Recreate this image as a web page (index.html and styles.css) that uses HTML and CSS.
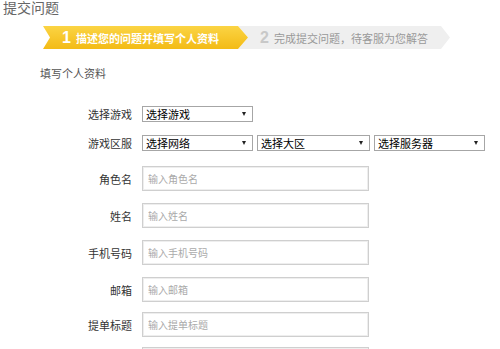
FILE: index.html
```html
<!DOCTYPE html>
<html lang="zh-CN">
<head>
    <meta charset="UTF-8">
    <title>提交问题</title>
    <link rel="stylesheet" href="styles.css">
</head>
<body>
    <div class="page">
        <h1 class="page-title">提交问题</h1>
        <div class="steps">
            <div class="step step-active"><span class="step-num">1</span>描述您的问题并填写个人资料</div>
            <div class="step step-next"><span class="step-num">2</span>完成提交问题，待客服为您解答</div>
        </div>
        <div class="section-title">填写个人资料</div>
        <form class="form">
            <div class="row row-select">
                <label>选择游戏</label>
                <div class="selects">
                    <div class="select w1">选择游戏</div>
                </div>
            </div>
            <div class="row row-select">
                <label>游戏区服</label>
                <div class="selects">
                    <div class="select w1">选择网络</div>
                    <div class="select w2">选择大区</div>
                    <div class="select w1">选择服务器</div>
                </div>
            </div>
            <div class="row row-input">
                <label>角色名</label>
                <input type="text" placeholder="输入角色名">
            </div>
            <div class="row row-input">
                <label>姓名</label>
                <input type="text" placeholder="输入姓名">
            </div>
            <div class="row row-input">
                <label>手机号码</label>
                <input type="text" placeholder="输入手机号码">
            </div>
            <div class="row row-input">
                <label>邮箱</label>
                <input type="text" placeholder="输入邮箱">
            </div>
            <div class="row row-input">
                <label>提单标题</label>
                <input type="text" placeholder="输入提单标题">
            </div>
            <div class="row row-input">
                <label></label>
                <input type="text">
            </div>
        </form>
    </div>
</body>
</html>
```

FILE: styles.css
```css
body {
    margin: 0;
    font-family: "Noto Sans CJK SC", "Liberation Sans", sans-serif;
    background-color: #fff;
    color: #333;
    overflow: hidden;
}
.page {
    width: 500px;
    height: 349px;
    overflow: hidden;
}
.page-title {
    margin: 0 0 0 3px;
    font-size: 14px;
    font-weight: normal;
    line-height: 14px;
    color: #666;
}
.steps {
    display: flex;
    margin: 12px 0 0 43px;
    height: 23px;
}
.step {
    display: flex;
    align-items: center;
    height: 23px;
    font-size: 11px;
    white-space: nowrap;
}
.step-num {
    font-size: 16px;
    font-weight: bold;
    margin-right: 5px;
    font-family: "Liberation Sans", sans-serif;
}
.step-active {
    position: relative;
    z-index: 2;
    width: 205px;
    padding-left: 19px;
    box-sizing: border-box;
    color: #fff;
    font-weight: bold;
    background: linear-gradient(#fbd444, #f3bb16);
    clip-path: polygon(0 0, 195px 0, 100% 50%, 195px 100%, 0 100%, 7px 50%);
}
.step-next {
    width: 212px;
    margin-left: -10px;
    padding-left: 22px;
    box-sizing: border-box;
    color: #999;
    background: #efefef;
    clip-path: polygon(0 0, 203px 0, 100% 50%, 203px 100%, 0 100%, 10px 50%);
}
.step-next .step-num {
    color: #c8c8c8;
}
.section-title {
    margin: 16px 0 0 40px;
    font-size: 11px;
    line-height: 16px;
    color: #555;
}
.form {
    margin-top: 25px;
}
.row {
    display: flex;
    align-items: center;
}
.row label {
    width: 132px;
    padding-right: 10px;
    text-align: right;
    font-size: 11px;
    color: #333;
    flex-shrink: 0;
}
.row-select {
    height: 16px;
    margin-bottom: 13px;
}
.row-select + .row-input {
    margin-top: 15px;
}
.selects {
    display: flex;
    gap: 4px;
}
.select {
    position: relative;
    height: 16px;
    box-sizing: border-box;
    border: 1px solid #a6a6a6;
    padding-left: 3px;
    font-size: 11px;
    line-height: 14px;
    color: #000;
}
.select::after {
    content: "";
    position: absolute;
    right: 6px;
    top: 5px;
    border-left: 2.5px solid transparent;
    border-right: 2.5px solid transparent;
    border-top: 4px solid #222;
}
.w1 {
    width: 111px;
}
.w2 {
    width: 113px;
}
.row-input {
    height: 25px;
    margin-bottom: 12px;
}
.row-input:nth-child(n+6) {
    margin-bottom: 10px;
}
.row-input input {
    width: 227px;
    height: 25px;
    box-sizing: border-box;
    border: 1px solid #cfcfcf;
    box-shadow: inset 0 0 0 1px #eee;
    padding: 0 5px;
    font-family: inherit;
    font-size: 10px;
    outline: none;
}
.row-input input::placeholder {
    color: #aaa;
}
```
